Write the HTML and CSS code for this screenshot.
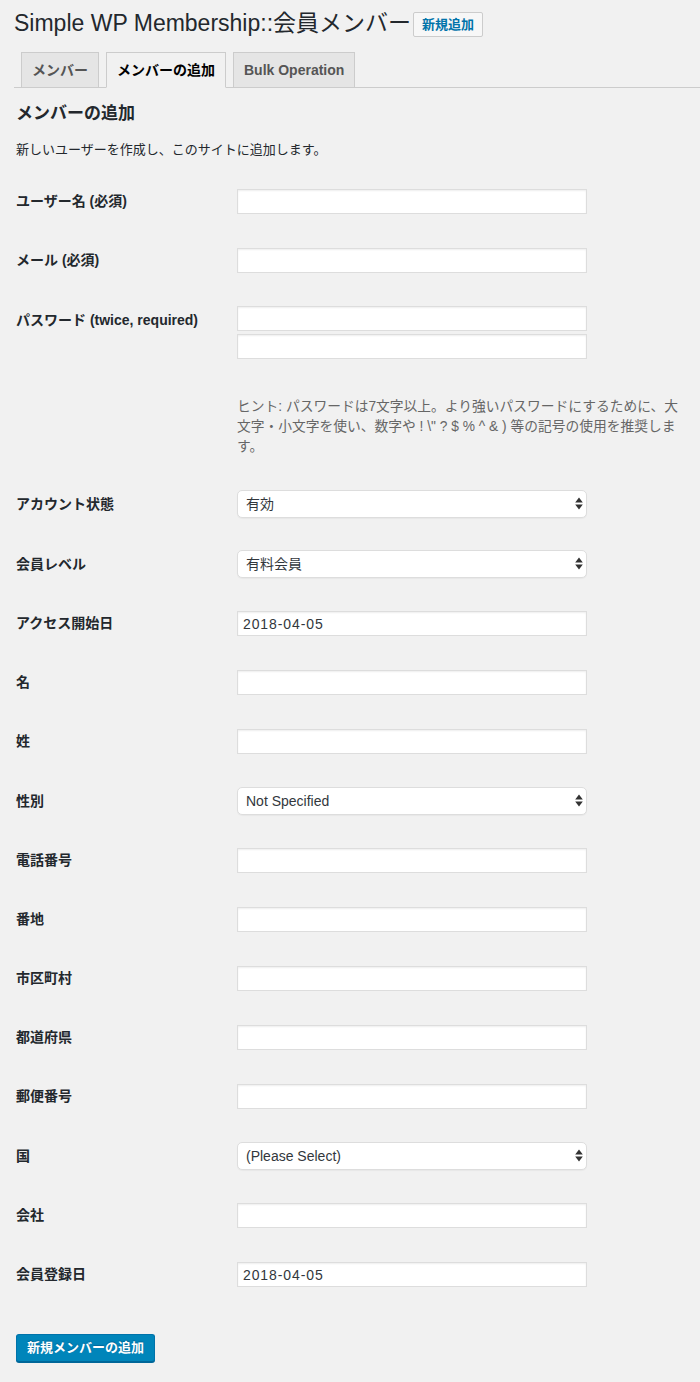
FILE: index.html
```html
<!DOCTYPE html>
<html lang="ja">
<head>
<meta charset="utf-8">
<title>Simple WP Membership</title>
<link rel="stylesheet" href="styles.css">
</head>
<body>
<div class="wrap">
  <div class="title-row">
    <h1 class="title">Simple WP Membership::会員メンバー</h1>
    <a class="title-action">新規追加</a>
  </div>
  <nav class="tabs">
    <a class="tab">メンバー</a>
    <a class="tab active">メンバーの追加</a>
    <a class="tab">Bulk Operation</a>
  </nav>
  <div class="content">
    <h2 class="heading">メンバーの追加</h2>
    <p class="desc">新しいユーザーを作成し、このサイトに追加します。</p>
    <form class="form">
      <div class="row">
        <label class="lbl">ユーザー名 (必須)</label>
        <div class="field"><input class="inp" type="text"></div>
      </div>
      <div class="row">
        <label class="lbl">メール (必須)</label>
        <div class="field"><input class="inp" type="text"></div>
      </div>
      <div class="row pwd">
        <label class="lbl">パスワード (twice, required)</label>
        <div class="field">
          <input class="inp" type="password">
          <input class="inp second" type="password">
          <p class="hint">ヒント: パスワードは7文字以上。より強いパスワードにするために、大文字・小文字を使い、数字や ! \" ? $ % ^ &amp; ) 等の記号の使用を推奨します。</p>
        </div>
      </div>
      <div class="row sel">
        <label class="lbl">アカウント状態</label>
        <div class="field"><span class="selwrap"><select class="select"><option>有効</option></select><svg class="arrows" width="8" height="13" viewBox="0 0 8 13"><path d="M4 0.5 L7.8 5.5 L0.2 5.5 Z M4 12.5 L7.8 7.5 L0.2 7.5 Z" fill="#333"/></svg></span></div>
      </div>
      <div class="row sel">
        <label class="lbl">会員レベル</label>
        <div class="field"><span class="selwrap"><select class="select"><option>有料会員</option></select><svg class="arrows" width="8" height="13" viewBox="0 0 8 13"><path d="M4 0.5 L7.8 5.5 L0.2 5.5 Z M4 12.5 L7.8 7.5 L0.2 7.5 Z" fill="#333"/></svg></span></div>
      </div>
      <div class="row">
        <label class="lbl">アクセス開始日</label>
        <div class="field"><input class="inp" type="text" value="2018-04-05"></div>
      </div>
      <div class="row">
        <label class="lbl">名</label>
        <div class="field"><input class="inp" type="text"></div>
      </div>
      <div class="row">
        <label class="lbl">姓</label>
        <div class="field"><input class="inp" type="text"></div>
      </div>
      <div class="row sel">
        <label class="lbl">性別</label>
        <div class="field"><span class="selwrap"><select class="select"><option>Not Specified</option></select><svg class="arrows" width="8" height="13" viewBox="0 0 8 13"><path d="M4 0.5 L7.8 5.5 L0.2 5.5 Z M4 12.5 L7.8 7.5 L0.2 7.5 Z" fill="#333"/></svg></span></div>
      </div>
      <div class="row">
        <label class="lbl">電話番号</label>
        <div class="field"><input class="inp" type="text"></div>
      </div>
      <div class="row">
        <label class="lbl">番地</label>
        <div class="field"><input class="inp" type="text"></div>
      </div>
      <div class="row">
        <label class="lbl">市区町村</label>
        <div class="field"><input class="inp" type="text"></div>
      </div>
      <div class="row">
        <label class="lbl">都道府県</label>
        <div class="field"><input class="inp" type="text"></div>
      </div>
      <div class="row">
        <label class="lbl">郵便番号</label>
        <div class="field"><input class="inp" type="text"></div>
      </div>
      <div class="row sel">
        <label class="lbl">国</label>
        <div class="field"><span class="selwrap"><select class="select"><option>(Please Select)</option></select><svg class="arrows" width="8" height="13" viewBox="0 0 8 13"><path d="M4 0.5 L7.8 5.5 L0.2 5.5 Z M4 12.5 L7.8 7.5 L0.2 7.5 Z" fill="#333"/></svg></span></div>
      </div>
      <div class="row">
        <label class="lbl">会社</label>
        <div class="field"><input class="inp" type="text"></div>
      </div>
      <div class="row">
        <label class="lbl">会員登録日</label>
        <div class="field"><input class="inp" type="text" value="2018-04-05"></div>
      </div>
      <button class="submit" type="button">新規メンバーの追加</button>
    </form>
  </div>
</div>
</body>
</html>
```

FILE: styles.css
```css
* { box-sizing: border-box; }

html, body {
  margin: 0;
  padding: 0;
  background: #f1f1f1;
}

body {
  font-family: "Liberation Sans", "Noto Sans CJK JP", sans-serif;
  color: #23282d;
  font-size: 13px;
  min-height: 1382px;
}

.wrap {
  padding-left: 14px;
}

.title-row {
  display: flex;
  align-items: center;
  padding: 9px 0 4px;
}

.title {
  margin: 0;
  font-size: 23px;
  line-height: 29px;
  font-weight: 400;
  color: #23282d;
}

.title-action {
  margin-left: 2px;
  display: inline-block;
  height: 25px;
  padding: 0 8px;
  line-height: 23px;
  border: 1px solid #ccc;
  border-radius: 2px;
  background: #f7f7f7;
  color: #0073aa;
  font-size: 13px;
  font-weight: 700;
  margin-top: 1px;
}

.tabs {
  display: flex;
  padding-top: 10px;
  border-bottom: 1px solid #ccc;
  height: 46px;
}

.tab {
  margin-left: 7px;
  padding: 5px 10px;
  font-size: 14px;
  line-height: 24px;
  font-weight: 700;
  border: 1px solid #ccc;
  background: #e5e5e5;
  color: #555;
  height: 36px;
}

.tab.active {
  background: #f1f1f1;
  color: #000;
  border-bottom-color: #f1f1f1;
}

.content {
  padding-left: 2px;
}

.heading {
  margin: 15px 0 0;
  font-size: 17px;
  line-height: 22px;
  font-weight: 700;
  color: #23282d;
}

.desc {
  margin: 15px 0 12px;
  font-size: 13px;
  line-height: 20px;
}

.form {
  margin: 0;
}

.row {
  display: flex;
  padding: 17px 0;
}

.row.sel {
  padding: 16px 0;
}

.row.pwd {
  padding: 16px 0 17px;
}

.lbl {
  width: 221px;
  flex: none;
  font-size: 14px;
  font-weight: 700;
  line-height: 25px;
  color: #23282d;
}

.row.pwd .lbl {
  padding-top: 2px;
}

.row.sel .lbl {
  line-height: 28px;
}

.field {
  display: flex;
  flex-direction: column;
}

.inp {
  display: block;
  width: 350px;
  height: 25px;
  margin: 0;
  padding: 0 5px;
  border: 1px solid #ddd;
  background: #fff;
  box-shadow: inset 0 1px 2px rgba(0, 0, 0, 0.07);
  font-family: "Liberation Sans", "Noto Sans CJK JP", sans-serif;
  font-size: 14px;
  letter-spacing: 0.9px;
  color: #32373c;
  outline: none;
}

.inp.second {
  margin-top: 3px;
}

.hint {
  width: 453px;
  margin: 38px 0 0;
  font-size: 13.75px;
  line-height: 20px;
  color: #666;
}

.selwrap {
  position: relative;
  display: block;
  width: 350px;
  height: 28px;
}

.select {
  -webkit-appearance: none;
  appearance: none;
  display: block;
  width: 350px;
  height: 28px;
  margin: 0;
  padding: 0 24px 0 8px;
  border: 1px solid #ddd;
  border-radius: 5px;
  background: #fff;
  box-shadow: 0 1px 1px rgba(0, 0, 0, 0.04);
  font-family: "Liberation Sans", "Noto Sans CJK JP", sans-serif;
  font-size: 14px;
  color: #32373c;
  outline: none;
}

.arrows {
  position: absolute;
  right: 4px;
  top: 7px;
}

.submit {
  display: block;
  margin: 30px 0 0;
  height: 28px;
  padding: 0 10px;
  border: 1px solid #0073aa;
  border-bottom-color: #006799;
  border-radius: 3px;
  background: #0085ba;
  box-shadow: 0 1px 0 #006799;
  color: #fff;
  font-family: "Liberation Sans", "Noto Sans CJK JP", sans-serif;
  font-size: 13px;
  font-weight: 700;
  line-height: 26px;
  text-shadow: 0 -1px 1px #006799;
}
```
